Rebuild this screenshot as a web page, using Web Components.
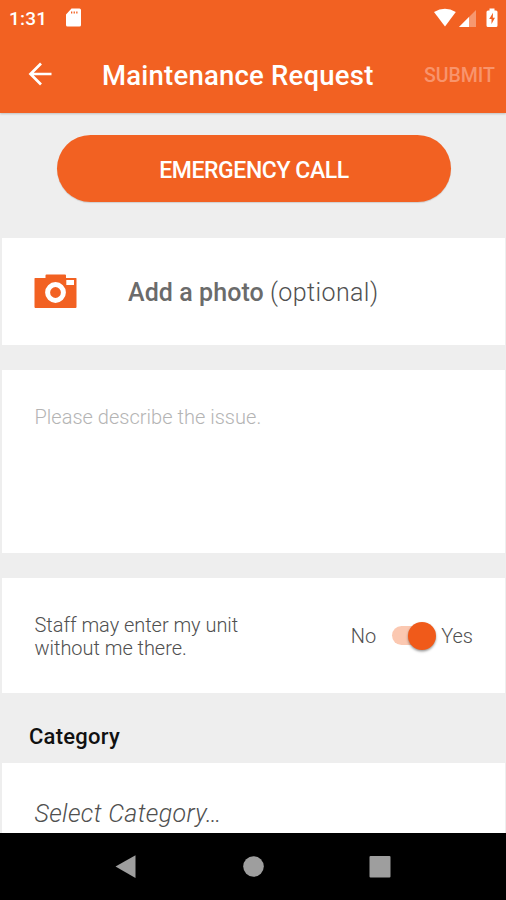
<!DOCTYPE html>
<html lang="en">
<head>
<meta charset="utf-8">
<title>Maintenance Request</title>
<style>
  html, body { margin: 0; height: 100%; overflow: hidden; }
  body { font-family: Roboto, "Liberation Sans", sans-serif; background: #eee; color: #6b6b6b; }
</style>
</head>
<body>
<maintenance-screen></maintenance-screen>
<script>
const define = (name, markup) => {
  const template = document.createElement('template');
  template.innerHTML = markup;
  customElements.define(name, class extends HTMLElement {
    constructor() {
      super();
      this.attachShadow({ mode: 'open' }).append(template.content.cloneNode(true));
    }
  });
};

define('status-bar', `
  <style>
    :host { display: flex; height: 36px; box-sizing: border-box; padding: 0 0 0 9px; align-items: center; color: #fff; font: 500 19px/37px Roboto, sans-serif; }
    .time { width: 56px; letter-spacing: .2px; }
    .end { margin-left: auto; display: flex; align-items: center; }
    svg { display: block; }
  </style>
  <span class="time">1:31</span>
  <svg width="17" height="20" viewBox="0 0 17 20"><path fill="#fff" fill-rule="evenodd" d="M6.500 .5H14.500Q16 .5 16 2V17Q16 18.500 14.500 18.500H2.500Q1 18.500 1 17V6.500ZM6 3.500V5.500H7.300V3.500ZM8.600 3.500V5.500H9.900V3.500ZM11.200 3.500V5.500H12.500V3.500Z"/></svg>
  <span class="end">
    <svg width="73" height="22" viewBox="0 0 73 22">
      <path fill="#fff" d="M8 4.200Q19-2 29.800 4.200L19 18.800Z" transform="translate(-7 .7)"/>
      <path fill="#fff" fill-opacity=".35" d="M43 3V20H26Z"/>
      <path fill="#fff" d="M36 10V20H26Z"/>
      <path fill="#fff" fill-rule="evenodd" d="M56.500 3.500V1.500H61.500V3.500H63Q64.500 3.500 64.500 5V18.500Q64.500 20 63 20H55Q53.500 20 53.500 18.500V5Q53.500 3.500 55 3.500ZM60 5.800L56.200 12H58.500V17L62 10.800H59.800Z"/>
    </svg>
  </span>`);

define('app-bar', `
  <style>
    :host { display: flex; height: 77px; box-sizing: border-box; padding: 0 11px 0 28px; align-items: center; color: #fff; }
    svg { display: block; margin-top: -2px; }
    h1 { margin: 0 0 0 50px; font-size: 27.500px; line-height: 77px; padding-top: 2px; font-weight: 500; letter-spacing: .22px; white-space: nowrap; }
    button { all: unset; margin-left: auto; font-size: 19.500px; line-height: 77px; padding-top: 1px; font-weight: 500; color: #f8946c; }
  </style>
  <svg width="24" height="24" viewBox="0 0 24 24"><path fill="none" stroke="#fff" stroke-width="2.700" d="M23.500 12H3M13 1.500L2.500 12L13 22.500"/></svg>
  <h1><slot></slot></h1>
  <button><slot name="action"></slot></button>`);

define('pill-button', `
  <style>
    :host { display: block; margin: 0 55px 0 57px; }
    button { all: unset; display: block; width: 100%; height: 67px; border-radius: 34px; background: #f26122; box-shadow: 0 1px 1px #0002; color: #fff; text-align: center; font-size: 23px; line-height: 71px; font-weight: 500; letter-spacing: -.42px; white-space: nowrap; }
  </style>
  <button><slot></slot></button>`);

define('form-card', `
  <style>
    :host { display: flex; box-sizing: border-box; margin: 0 1px 0 2px; background: #fff; }
  </style>
  <slot></slot>`);

define('camera-icon', `
  <style>:host { display: block; width: 43px; height: 35px; } svg { display: block; }</style>
  <svg width="43" height="35" viewBox="0 0 43 35">
    <path fill="#f26122" d="M1 4H11.500V1.500Q11.500.5 12.500.5H31Q32 .5 32 1.500V4H42Q42.500 4 42.500 4.500V33Q42.500 34 41.500 34H1.500Q.5 34 .5 33V4.500Q.5 4 1 4Z"/>
    <circle cx="21.500" cy="18.500" r="7.900" fill="#f26122" stroke="#fff" stroke-width="5"/>
    <path fill="#fff" d="M32.300 6H40V11H32.300Z"/>
  </svg>`);

define('toggle-switch', `
  <style>
    :host { display: flex; align-items: center; font-size: 20px; line-height: 24px; }
    .track { width: 36px; height: 19px; margin: 0 13px 0 16px; border-radius: 10px; background: #fbc8b1; display: flex; align-items: center; }
    .thumb { flex: none; width: 28px; height: 28px; margin-left: 16px; border-radius: 50%; background: #f05a1a; box-shadow: 0 1.500px 2.500px #0006; }
    slot { display: block; white-space: nowrap; padding-top: 1px; }
  </style>
  <slot name="off"></slot>
  <span class="track" role="switch" aria-checked="true"><span class="thumb"></span></span>
  <slot name="on"></slot>`);

define('nav-bar', `
  <style>
    :host { display: block; height: 67px; background: #000; }
    svg { display: block; }
  </style>
  <svg width="506" height="67" viewBox="0 0 506 67" fill="#9e9e9e">
    <path d="M115.500 33.500L135.500 22.300V45Z"/>
    <circle cx="253.500" cy="33.500" r="10.300"/>
    <rect x="369.500" y="23" width="21" height="21.500" rx="1"/>
  </svg>`);

define('maintenance-screen', `
  <style>
    :host { display: flex; flex-direction: column; width: 506px; height: 900px; background: #eee; overflow: hidden; }
    header { flex: none; height: 113px; background: #f26122; box-shadow: 0 1px 2px #0003; }
    main { flex: 1; min-height: 0; overflow: hidden; padding-top: 22px; box-sizing: border-box; }
    .photo { height: 107px; margin-top: 36px; padding-left: 32px; align-items: center; gap: 51px; font-size: 25px; white-space: nowrap; }
    .photo div { padding-top: 2px; }
    .photo b { font-weight: 500; letter-spacing: .07px; }
    .photo span { font-weight: 300; color: #505050; letter-spacing: .4px; }
    .issue { height: 183px; margin-top: 25px; padding: 36px 32.500px; font-size: 20px; line-height: 23px; font-weight: 300; letter-spacing: .02px; color: #b4b4b4; }
    .access { height: 115px; margin-top: 25px; padding: 0 32px 0 32.500px; align-items: center; justify-content: space-between; font-size: 20px; font-weight: 300; color: #505050; }
    .access p { margin: 2px 0 0; line-height: 23px; letter-spacing: -.04px; white-space: nowrap; }
    h2 { margin: 0; padding: 8px 0 0 29px; height: 61px; font-size: 22px; line-height: 71px; font-weight: 500; letter-spacing: .25px; color: #111; }
    .category { height: 107px; margin-top: 1px; padding: 36px 32.500px; font-size: 25px; line-height: 30px; font-style: italic; font-weight: 300; letter-spacing: .35px; color: #505050; }
  </style>
  <header>
    <status-bar></status-bar>
    <app-bar>Maintenance Request<span slot="action">SUBMIT</span></app-bar>
  </header>
  <main>
    <pill-button>EMERGENCY CALL</pill-button>
    <form-card class="photo"><camera-icon></camera-icon><div><b>Add a photo</b> <span>(optional)</span></div></form-card>
    <form-card class="issue">Please describe the issue.</form-card>
    <form-card class="access">
      <p>Staff may enter my unit<br>without me there.</p>
      <toggle-switch><span slot="off">No</span><span slot="on">Yes</span></toggle-switch>
    </form-card>
    <h2>Category</h2>
    <form-card class="category">Select Category…</form-card>
  </main>
  <nav-bar></nav-bar>`);
</script>
</body>
</html>
